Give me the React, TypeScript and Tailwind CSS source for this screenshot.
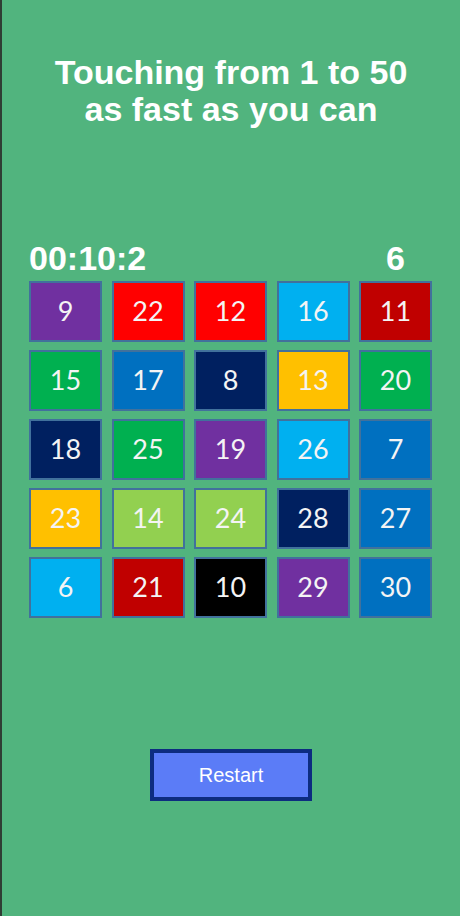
const tiles: { n: number; c: string }[] = [
  { n: 9, c: 'bg-[#7030a0]' },
  { n: 22, c: 'bg-[#ff0000]' },
  { n: 12, c: 'bg-[#ff0000]' },
  { n: 16, c: 'bg-[#00b0f0]' },
  { n: 11, c: 'bg-[#c00000]' },
  { n: 15, c: 'bg-[#00b050]' },
  { n: 17, c: 'bg-[#0070c0]' },
  { n: 8, c: 'bg-[#002060]' },
  { n: 13, c: 'bg-[#ffc000]' },
  { n: 20, c: 'bg-[#00b050]' },
  { n: 18, c: 'bg-[#002060]' },
  { n: 25, c: 'bg-[#00b050]' },
  { n: 19, c: 'bg-[#7030a0]' },
  { n: 26, c: 'bg-[#00b0f0]' },
  { n: 7, c: 'bg-[#0070c0]' },
  { n: 23, c: 'bg-[#ffc000]' },
  { n: 14, c: 'bg-[#92d050]' },
  { n: 24, c: 'bg-[#92d050]' },
  { n: 28, c: 'bg-[#002060]' },
  { n: 27, c: 'bg-[#0070c0]' },
  { n: 6, c: 'bg-[#00b0f0]' },
  { n: 21, c: 'bg-[#c00000]' },
  { n: 10, c: 'bg-[#000000]' },
  { n: 29, c: 'bg-[#7030a0]' },
  { n: 30, c: 'bg-[#0070c0]' },
];

export default function App() {
  return (
    <div className="min-h-[916px] w-[460px] bg-[#51b47e] border-l-2 border-[#2f3d34] font-['Liberation_Sans',Arial,sans-serif] text-white">
      {/* Title */}
      <h1 className="pt-[54px] text-center text-[34px] font-bold leading-[37px]">
        Touching from 1 to 50
        <br />
        as fast as you can
      </h1>

      {/* Timer + next number */}
      <div className="mt-[113px] ml-[27px] flex w-[403px] items-end justify-between">
        <span className="text-[34px] font-bold leading-[34px]">00:10:2</span>
        <span className="w-[73px] text-center text-[34px] font-bold leading-[34px]">6</span>
      </div>

      {/* Board */}
      <div className="ml-[27px] mt-[6px] grid grid-cols-[repeat(5,73px)] gap-x-[9.5px] gap-y-2">
        {tiles.map((t) => (
          <div
            key={t.n}
            className={`flex h-[61px] items-center justify-center border-2 border-[#41719c] ${t.c} font-['Lato','Noto_Sans',sans-serif] text-[27px] text-[#f4f4f4]`}
          >
            {t.n}
          </div>
        ))}
      </div>

      {/* Restart */}
      <div className="mt-[131px] flex justify-center">
        <button className="h-[52px] w-[162px] border-4 border-[#0d2c80] bg-[#5b7cf7] text-[20px] text-white">
          Restart
        </button>
      </div>
    </div>
  );
}
